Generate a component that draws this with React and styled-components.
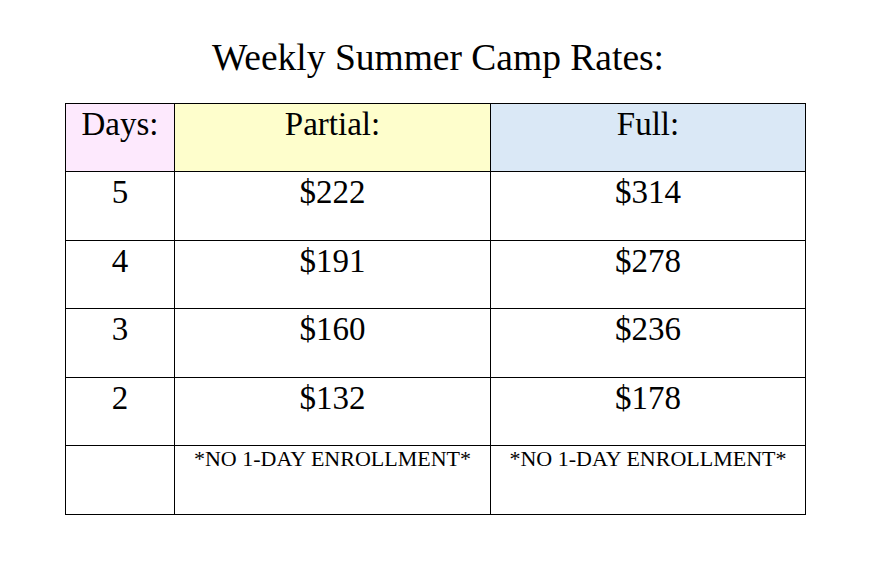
import React from 'react'
import styled, { createGlobalStyle } from 'styled-components'

const GlobalStyle = createGlobalStyle`
    body {
        margin: 0;
        background: #ffffff;
        font-family: "Liberation Serif", "Times New Roman", serif;
        color: #000000;
    }
`

const rates = [
    { days: '5', partial: '$222', full: '$314' },
    { days: '4', partial: '$191', full: '$278' },
    { days: '3', partial: '$160', full: '$236' },
    { days: '2', partial: '$132', full: '$178' },
]

const App = () => {
    return (
        <Page>
            <GlobalStyle />
            <Title>Weekly Summer Camp Rates:</Title>
            <RateTable>
                <Cell $bg="#fde9fd">Days:</Cell>
                <Cell $bg="#fefecc">Partial:</Cell>
                <Cell $bg="#dae8f6">Full:</Cell>

                {rates.map((r) => (
                    <React.Fragment key={r.days}>
                        <Cell>{r.days}</Cell>
                        <Cell>{r.partial}</Cell>
                        <Cell>{r.full}</Cell>
                    </React.Fragment>
                ))}

                <Cell />
                <Cell $small>*NO 1-DAY ENROLLMENT*</Cell>
                <Cell $small>*NO 1-DAY ENROLLMENT*</Cell>
            </RateTable>
        </Page>
    )
}

export default App


const Page = styled.div`
    width: 741px;
    padding: 36px 0 0 65px;
    display: flex;
    flex-direction: column;
    gap: 23px;
`

const Title = styled.h1`
    margin: 0;
    padding-left: 5px;
    height: 44px;
    font-size: 37.5px;
    line-height: 44px;
    font-weight: normal;
    text-align: center;
`

const RateTable = styled.div`
    display: grid;
    grid-template-columns: 109px 316px 315px;
    grid-template-rows: 68px 69px 68px 69px 68px 69px;
    border-top: 1px solid #000;
    border-left: 1px solid #000;
`

const Cell = styled.div`
    box-sizing: border-box;
    border-right: 1px solid #000;
    border-bottom: 1px solid #000;
    background: ${(p) => p.$bg || '#ffffff'};
    padding-top: ${(p) => (p.$small ? '0' : '1px')};
    text-align: center;
    font-size: ${(p) => (p.$small ? '22px' : '33px')};
    line-height: ${(p) => (p.$small ? '26px' : '38px')};
    white-space: nowrap;
`
